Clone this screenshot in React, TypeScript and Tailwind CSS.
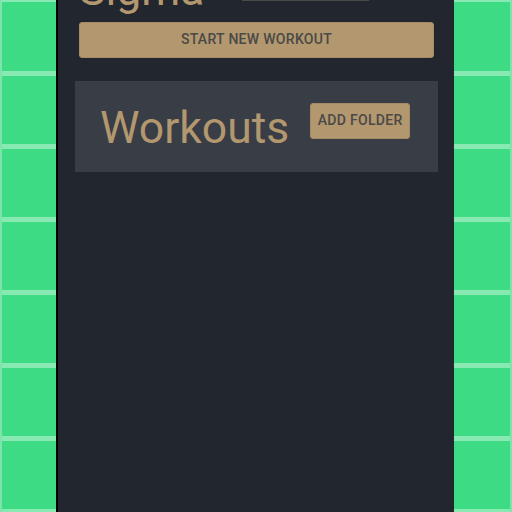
import React from "react";

export default function App() {
  return (
    <div className="w-[512px] h-[512px] overflow-hidden flex font-['Roboto',sans-serif] bg-[#3ddc84] bg-[repeating-linear-gradient(to_bottom,#89e9b3_0px,#89e9b3_2.5px,#3ddc84_2.5px,#3ddc84_70.64px,#89e9b3_70.64px,#89e9b3_73.14px)]">
      <div className="w-[56px] h-full shrink-0 border-l-2 border-[#7fe4ab]" />
      <div className="w-[2px] h-full shrink-0 bg-[#000000]" />
      <div className="w-[396px] h-full shrink-0 bg-[#22262e] flex flex-col pl-[21px] pr-[20px]">
        <div className="flex items-start mt-[-43px]">
          <div className="text-[44.5px] leading-normal text-[#b3976f]">Sigma</div>
          <div className="ml-[38px] w-[127px] h-[44px] border-b border-[#4a4a47]" />
        </div>
        <button className="mt-[-2px] h-[36px] w-full rounded-[3px] border border-[#a58a64] bg-[#b3976f] text-[14px] font-medium tracking-[0.3px] text-[#4a4947]">
          START NEW WORKOUT
        </button>
        <div className="mt-[23px] mx-[-4px] h-[91px] bg-[#393d45] flex items-start pt-[22px] pl-[25px]">
          <div className="mt-[-8px] text-[44.5px] leading-normal text-[#b3976f]">Workouts</div>
          <button className="ml-[21px] h-[36px] px-[6.5px] rounded-[3px] border border-[#a58a64] bg-[#b3976f] text-[14px] font-medium tracking-[0.3px] text-[#4a4947]">
            ADD FOLDER
          </button>
        </div>
      </div>
      <div className="flex-1 h-full border-r-2 border-[#7fe4ab]" />
    </div>
  );
}
